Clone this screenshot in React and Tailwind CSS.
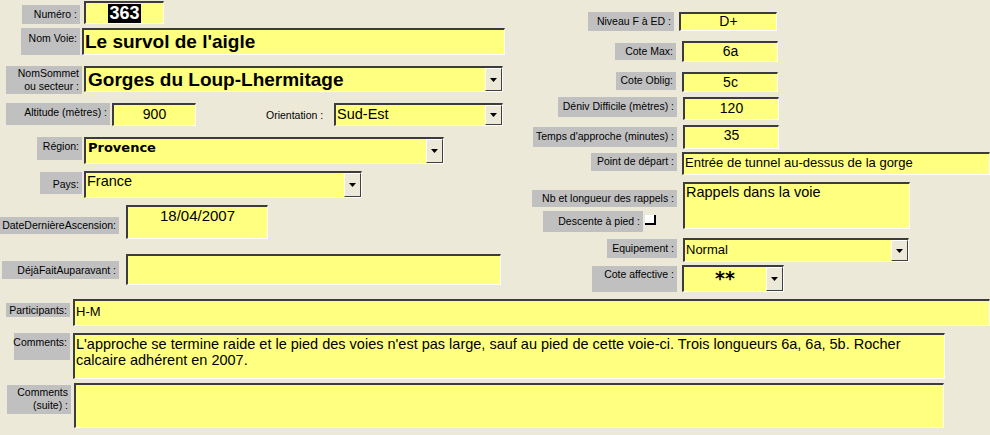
import React from 'react'

const FONT = { fontFamily: '"Liberation Sans", Arial, sans-serif' }

function Label({ className = '', children }) {
    return (
        <div className={`flex shrink-0 items-start justify-end bg-[#c0c0c0] pr-[3px] text-[10.5px] leading-[13px] text-black ${className}`}>
            <span className="whitespace-nowrap text-right">{children}</span>
        </div>
    )
}

function Field({ className = '', children }) {
    return (
        <div className={`shrink-0 overflow-hidden border-t-2 border-l-2 border-r border-b border-t-[#3c3c3c] border-l-[#3c3c3c] border-r-white border-b-white bg-[#ffff80] text-black ${className}`}>
            {children}
        </div>
    )
}

function DropButton() {
    return (
        <div className="flex w-[17px] shrink-0 items-center justify-center self-stretch border-t border-l border-r border-b border-t-white border-l-white border-r-[#404040] border-b-[#404040] bg-[#ece9d8]">
            <svg width="7" height="4" viewBox="0 0 7 4">
                <path d="M0 0 H7 L3.5 4 Z" fill="#000" />
            </svg>
        </div>
    )
}

function Combo({ className = '', textClass = '', children }) {
    return (
        <Field className={`flex ${className}`}>
            <div className={`min-w-0 flex-1 overflow-hidden whitespace-nowrap ${textClass}`}>{children}</div>
            <DropButton />
        </Field>
    )
}

export default function App() {
    return (
        <div className="h-[435px] w-[990px] overflow-hidden bg-[#ece9d8]" style={FONT}>
            <div className="flex">
                {/* colonne gauche */}
                <div className="flex w-[520px] shrink-0 flex-col">
                    <div className="mt-[1px] flex items-start">
                        <Label className="ml-[22px] mt-[4px] h-[19px] w-[58px] pt-[3px]">Numéro :</Label>
                        <Field className="ml-[4px] flex h-[23px] w-[80px] items-center justify-center">
                            <span className="bg-black px-[1px] text-[18px] font-bold leading-[19px] text-white">363</span>
                        </Field>
                    </div>
                    <div className="mt-[4px] flex items-start">
                        <Label className="ml-[21px] h-[27px] w-[59px] pt-[4px]">Nom Voie:</Label>
                        <Field className="ml-[2px] h-[27px] w-[423px] pl-[1px] text-[19px] font-bold leading-[24px]">
                            Le survol de l'aigle
                        </Field>
                    </div>
                    <div className="mt-[11px] flex items-start">
                        <Label className="ml-[6px] h-[28px] w-[76px] pt-[1px]">
                            NomSommet<br />ou secteur :
                        </Label>
                        <Combo className="ml-[2px] h-[26px] w-[419px]" textClass="pl-[2px] text-[19px] font-bold leading-[23px]">
                            Gorges du Loup-Lhermitage
                        </Combo>
                    </div>
                    <div className="mt-[9px] flex items-start">
                        <Label className="ml-[6px] h-[22px] w-[104px] pt-[3px]">Altitude (mètres) :</Label>
                        <Field className="ml-[2px] h-[23px] w-[84px] text-center text-[14px] leading-[19px]">900</Field>
                        <div className="ml-[70px] mt-[6px] w-[68px] shrink-0 whitespace-nowrap text-[10.5px] leading-[13px]">Orientation :</div>
                        <Combo className="h-[23px] w-[169px]" textClass="pl-[1px] text-[14.5px] leading-[18px]">
                            Sud-Est
                        </Combo>
                    </div>
                    <div className="mt-[11px] flex items-start">
                        <Label className="ml-[37px] h-[23px] w-[45px] pt-[3px]">Région:</Label>
                        <Combo
                            className="ml-[2px] h-[27px] w-[360px]"
                            textClass="pl-[2px] pt-[1px] text-[13px] font-bold leading-[16px] [font-family:'DejaVu_Sans',sans-serif]"
                        >
                            Provence
                        </Combo>
                    </div>
                    <div className="mt-[7px] flex items-start">
                        <Label className="ml-[40px] mt-[1px] h-[22px] w-[42px] pt-[6px]">Pays:</Label>
                        <Combo className="ml-[2px] h-[27px] w-[278px]" textClass="pl-[1px] text-[14.5px] leading-[17px]">
                            France
                        </Combo>
                    </div>
                    <div className="mt-[7px] flex items-start">
                        <Label className="mt-[12px] h-[17px] w-[119px] pt-[2px]">DateDernièreAscension:</Label>
                        <Field className="ml-[7px] h-[34px] w-[142px] text-center text-[15px] leading-[18px]">18/04/2007</Field>
                    </div>
                    <div className="mt-[15px] flex items-start">
                        <Label className="ml-[2px] mt-[7px] h-[18px] w-[117px] pt-[3px]">DéjàFaitAuparavant :</Label>
                        <Field className="ml-[7px] h-[31px] w-[375px]" />
                    </div>
                </div>

                {/* colonne droite */}
                <div className="flex w-[470px] shrink-0 flex-col">
                    <div className="mt-[12px] flex items-start">
                        <Label className="ml-[68px] h-[19px] w-[86px] pt-[3px]">Niveau F à ED :</Label>
                        <Field className="ml-[5px] h-[19px] w-[98px] text-center text-[14px] leading-[15px]">D+</Field>
                    </div>
                    <div className="mt-[10px] flex items-start">
                        <Label className="ml-[95px] mt-[2px] h-[17px] w-[61px] pt-[2px]">Cote Max:</Label>
                        <Field className="ml-[6px] h-[21px] w-[96px] text-center text-[14px] leading-[17px]">6a</Field>
                    </div>
                    <div className="mt-[10px] flex items-start">
                        <Label className="ml-[96px] h-[18px] w-[60px] pt-[2px]">Cote Oblig:</Label>
                        <Field className="ml-[6px] h-[20px] w-[96px] text-center text-[14px] leading-[17px]">5c</Field>
                    </div>
                    <div className="mt-[5px] flex items-start">
                        <Label className="ml-[38px] h-[20px] w-[119px] pt-[3px]">Déniv Difficile (mètres) :</Label>
                        <Field className="ml-[6px] h-[23px] w-[96px] text-center text-[14px] leading-[19px]">120</Field>
                    </div>
                    <div className="mt-[5px] flex items-start">
                        <Label className="ml-[13px] mt-[2px] h-[20px] w-[144px] pt-[3px]">Temps d'approche (minutes) :</Label>
                        <Field className="ml-[6px] h-[24px] w-[96px] text-center text-[14px] leading-[17px]">35</Field>
                    </div>
                    <div className="mt-[3px] flex items-start">
                        <Label className="ml-[71px] mt-[1px] h-[18px] w-[86px] pt-[2px]">Point de départ :</Label>
                        <Field className="ml-[5px] h-[23px] w-[308px] whitespace-nowrap pl-[1px] text-[13px] leading-[18px]">
                            Entrée de tunnel au-dessus de la gorge
                        </Field>
                    </div>
                    <div className="mt-[7px] flex items-start">
                        <div className="flex w-[163px] shrink-0 flex-col">
                            <Label className="ml-[12px] mt-[8px] h-[17px] w-[145px] pt-[2px]">Nb et longueur des rappels :</Label>
                            <div className="mt-[4px] flex items-start">
                                <Label className="ml-[23px] h-[21px] w-[100px] pt-[4px]">Descente à pied :</Label>
                                <div className="ml-[2px] mt-[4px] h-[10px] w-[11px] border-r-2 border-b-2 border-r-black border-b-black bg-white" />
                            </div>
                        </div>
                        <Field className="h-[47px] w-[227px] pl-[1px] text-[14.5px] leading-[17px]">Rappels dans la voie</Field>
                    </div>
                    <div className="mt-[6px] flex items-start">
                        <Label className="ml-[87px] mt-[1px] h-[19px] w-[70px] pt-[3px]">Equipement :</Label>
                        <Combo className="ml-[6px] h-[24px] w-[226px]" textClass="pl-[1px] text-[13px] leading-[19px]">
                            Normal
                        </Combo>
                    </div>
                    <div className="mt-[3px] flex items-start">
                        <Label className="ml-[72px] mt-[1px] h-[26px] w-[85px] pt-[2px]">Cote affective :</Label>
                        <Combo
                            className="ml-[5px] h-[27px] w-[102px]"
                            textClass="pt-[1px] text-center text-[19px] font-bold leading-[20px] [font-family:'DejaVu_Sans',sans-serif]"
                        >
                            **
                        </Combo>
                    </div>
                </div>
            </div>

            {/* bas du formulaire */}
            <div className="mt-[7px] flex items-start">
                <Label className="ml-[6px] mt-[4px] h-[14px] w-[64px] pt-[1px]">Participants:</Label>
                <Field className="ml-[3px] h-[27px] flex-1 pl-[1px] pt-[3px] text-[13px] leading-[16px]">H-M</Field>
            </div>
            <div className="mt-[7px] flex items-start">
                <Label className="ml-[14px] h-[27px] w-[56px] pt-[3px]">Comments:</Label>
                <Field className="ml-[3px] h-[46px] w-[872px] pl-[1px] pt-[1px] text-[14.5px] leading-[16px]">
                    <span className="whitespace-nowrap">
                        L'approche se termine raide et le pied des voies n'est pas large, sauf au pied de cette voie-ci. Trois longueurs 6a, 6a, 5b. Rocher
                    </span>
                    <br />
                    calcaire adhérent en 2007.
                </Field>
            </div>
            <div className="mt-[4px] flex items-start">
                <Label className="ml-[7px] mt-[2px] h-[29px] w-[64px] pt-[1px]">
                    Comments<br />(suite) :
                </Label>
                <Field className="ml-[3px] h-[45px] w-[870px]" />
            </div>
        </div>
    )
}
